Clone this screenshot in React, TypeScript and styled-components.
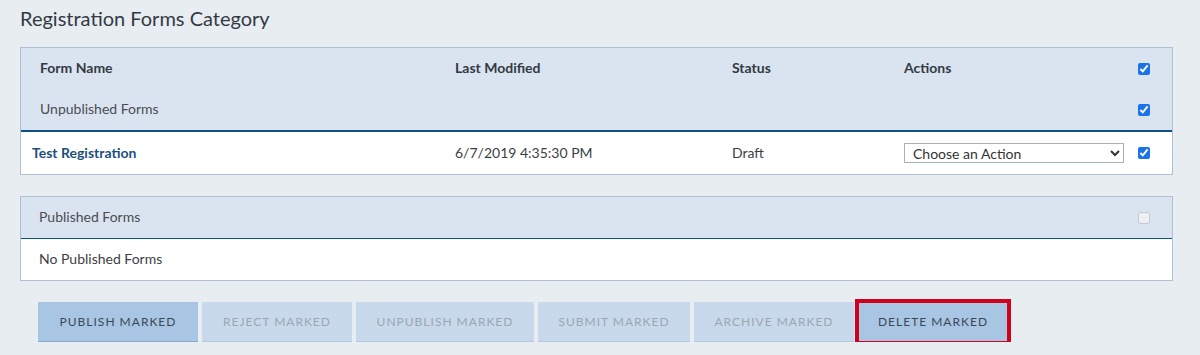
import React from "react";
import styled, { createGlobalStyle } from "styled-components";

const GlobalStyle = createGlobalStyle`
  html, body {
    margin: 0;
    padding: 0;
    background: #e8edf2;
    font-family: Lato, "Open Sans", Arial, sans-serif;
    color: #333;
  }
  * { box-sizing: border-box; }
`;

const Page = styled.div`
  padding: 6px 27px 0 20px;
`;

const Title = styled.h1`
  margin: 0;
  font-size: 20px;
  line-height: 24px;
  font-weight: 400;
  color: #333a44;
`;

const Panel = styled.div<{ $top: number }>`
  margin-top: ${(p) => p.$top}px;
  border: 1px solid #afc0d4;
  background: #ffffff;
`;

const HeadSection = styled.div<{ $line: number }>`
  background: #dae4f0;
  border-bottom: ${(p) => p.$line}px solid #0f5286;
`;

const Row = styled.div<{ $h: number }>`
  display: grid;
  grid-template-columns: 434px 277px 172px 234px 1fr;
  align-items: center;
  height: ${(p) => p.$h}px;
`;

const Cell = styled.div<{ $pad?: number }>`
  padding-left: ${(p) => p.$pad ?? 0}px;
  padding-bottom: 2px;
  font-size: 14px;
  white-space: nowrap;
`;

const HeadLabel = styled(Cell)`
  font-weight: 700;
  color: #343a42;
`;

const GroupLabel = styled(Cell)`
  color: #4b4d52;
`;

const FormLink = styled(Cell)`
  font-weight: 700;
  color: #1d4f7c;
`;

const DataText = styled(Cell)`
  color: #3b3f45;
`;

const CheckCell = styled.div`
  display: flex;
  align-items: center;
`;

const Check = styled.input`
  width: 12px;
  height: 12px;
  margin: 0;
  accent-color: #1a73e8;
`;

const Select = styled.select`
  width: 220px;
  height: 20px;
  font-family: Lato, "Open Sans", Arial, sans-serif;
  font-size: 14px;
  color: #333;
  border: 1px solid #a8b0b8;
  border-radius: 0;
  background: #fff;
  padding: 0 0 0 4px;
`;

const ButtonBar = styled.div`
  display: flex;
  gap: 4px;
  margin-top: 21px;
  padding-left: 18px;
`;

const ActionButton = styled.button<{ $w: number; $active?: boolean; $flagged?: boolean }>`
  width: ${(p) => p.$w}px;
  height: 40px;
  padding: 0;
  border: none;
  border-bottom: 1px solid ${(p) => (p.$active ? "#8ea9c7" : "#b5c7db")};
  background: ${(p) => (p.$active ? "#a8c6e3" : "#c8d9eb")};
  color: ${(p) => (p.$active ? "#3d4857" : "#9ca6b1")};
  font-family: Lato, "Open Sans", Arial, sans-serif;
  font-size: 12px;
  letter-spacing: 1px;
  text-transform: uppercase;
  text-align: center;
  cursor: ${(p) => (p.$active ? "pointer" : "default")};
  outline: ${(p) => (p.$flagged ? "4px solid #d0021b" : "none")};
  outline-offset: -1px;
`;

const buttons = [
  { label: "Publish Marked", w: 160, active: true },
  { label: "Reject Marked", w: 150 },
  { label: "Unpublish Marked", w: 178 },
  { label: "Submit Marked", w: 152 },
  { label: "Archive Marked", w: 160 },
  { label: "Delete Marked", w: 150, active: true, flagged: true },
];

export default function App() {
  return (
    <>
      <GlobalStyle />
      <Page>
        <Title>Registration Forms Category</Title>

        <Panel $top={17}>
          <HeadSection $line={2}>
            <Row $h={41}>
              <HeadLabel $pad={19}>Form Name</HeadLabel>
              <HeadLabel>Last Modified</HeadLabel>
              <HeadLabel>Status</HeadLabel>
              <HeadLabel>Actions</HeadLabel>
              <CheckCell>
                <Check type="checkbox" defaultChecked />
              </CheckCell>
            </Row>
            <Row $h={41}>
              <GroupLabel $pad={19}>Unpublished Forms</GroupLabel>
              <div />
              <div />
              <div />
              <CheckCell>
                <Check type="checkbox" defaultChecked />
              </CheckCell>
            </Row>
          </HeadSection>
          <Row $h={42}>
            <FormLink $pad={11}>Test Registration</FormLink>
            <DataText>6/7/2019 4:35:30 PM</DataText>
            <DataText>Draft</DataText>
            <div>
              <Select defaultValue="">
                <option value="">Choose an Action</option>
              </Select>
            </div>
            <CheckCell>
              <Check type="checkbox" defaultChecked />
            </CheckCell>
          </Row>
        </Panel>

        <Panel $top={21}>
          <HeadSection $line={1}>
            <Row $h={41}>
              <GroupLabel $pad={18}>Published Forms</GroupLabel>
              <div />
              <div />
              <div />
              <CheckCell>
                <Check type="checkbox" disabled />
              </CheckCell>
            </Row>
          </HeadSection>
          <Row $h={41}>
            <DataText $pad={18}>No Published Forms</DataText>
          </Row>
        </Panel>

        <ButtonBar>
          {buttons.map((b) => (
            <ActionButton key={b.label} $w={b.w} $active={b.active} $flagged={b.flagged}>
              {b.label}
            </ActionButton>
          ))}
        </ButtonBar>
      </Page>
    </>
  );
}
